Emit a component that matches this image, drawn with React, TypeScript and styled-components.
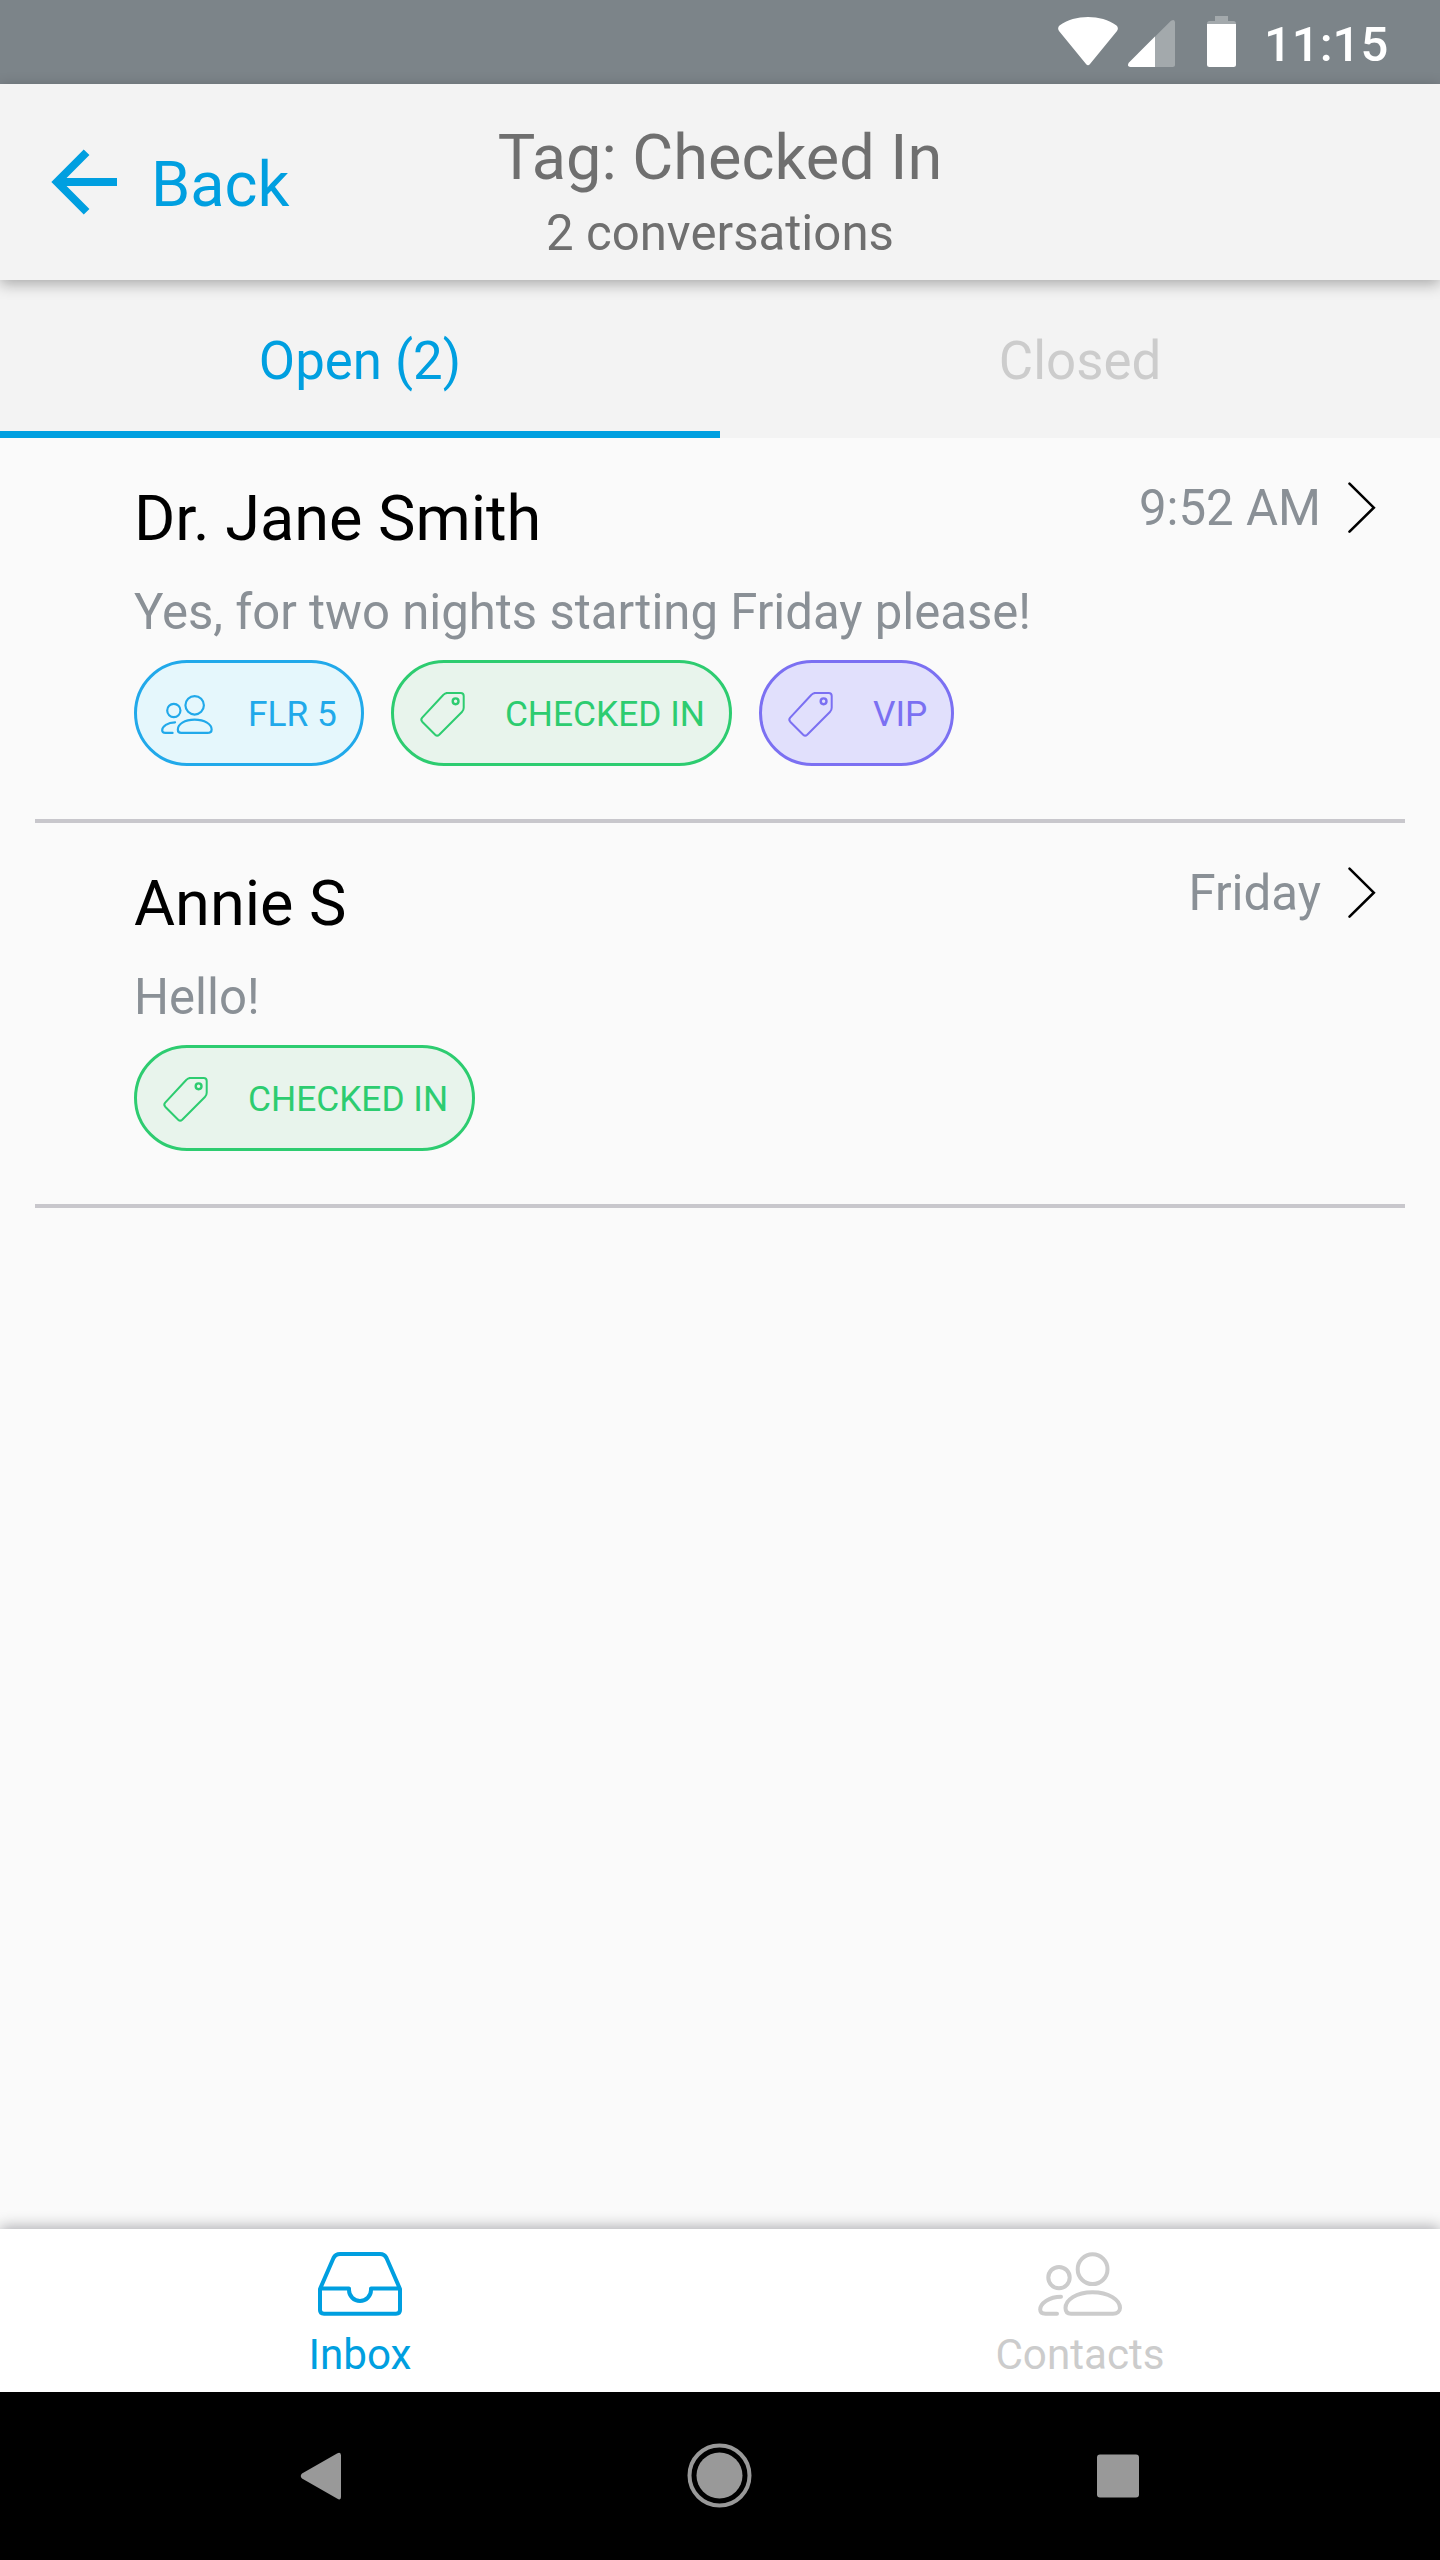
import React from "react";
import styled, { createGlobalStyle } from "styled-components";

const GlobalStyle = createGlobalStyle`
  * { box-sizing: border-box; }
  body { margin: 0; background: #fafafa; font-family: Roboto, "Liberation Sans", sans-serif; }
`;

const Screen = styled.div`
  width: 1440px;
  height: 2560px;
  display: flex;
  flex-direction: column;
  background: #fafafa;
  overflow: hidden;
`;

const StatusBar = styled.div`
  height: 84px;
  flex: none;
  display: flex;
  align-items: flex-start;
  justify-content: flex-end;
  padding-right: 48px;
  background: #7c8489;
`;

const StatusIcons = styled.svg`
  width: 190px;
  height: 84px;
  margin-right: 17px;
`;

const Clock = styled.span`
  width: 128px;
  font-size: 49px;
  font-weight: 500;
  line-height: 90px;
  color: #fff;
  white-space: nowrap;
`;

const Header = styled.header`
  height: 196px;
  flex: none;
  display: grid;
  grid-template-columns: 460px 520px 460px;
  background: #f3f3f3;
  box-shadow: 0 4px 14px rgba(0, 0, 0, 0.31);
  z-index: 1;
`;

const BackButton = styled.button`
  display: flex;
  align-items: flex-start;
  padding: 0 0 0 42px;
  border: 0;
  background: none;
  font: inherit;
  color: #009fe0;
`;

const BackArrow = styled.svg`
  width: 84px;
  height: 84px;
  margin-top: 56px;
`;

const BackLabel = styled.span`
  margin: 64px 0 0 25px;
  font-size: 63px;
  line-height: 74px;
`;

const Heading = styled.div`
  display: flex;
  flex-direction: column;
  align-items: center;
  padding-top: 37px;
  color: #6f6f6f;
  white-space: nowrap;
`;

const Title = styled.h1`
  margin: 0;
  font-size: 63px;
  font-weight: 400;
  line-height: 74px;
`;

const Subtitle = styled.span`
  margin-top: 9px;
  font-size: 49.2px;
  line-height: 58px;
`;

const Tabs = styled.div`
  height: 158px;
  flex: none;
  display: flex;
  background: #f3f3f3;
`;

const Tab = styled.div<{ $active?: boolean }>`
  flex: 1;
  padding-top: 49px;
  border-bottom: 7px solid ${(p) => (p.$active ? "#009fe0" : "transparent")};
  text-align: center;
  font-size: 52.8px;
  line-height: 64px;
  color: ${(p) => (p.$active ? "#009fe0" : "#cccccc")};
`;

const List = styled.main`
  flex: 1;
  padding: 0 35px;
`;

const Row = styled.article`
  height: 385px;
  padding: 44px 27px 0 99px;
  border-bottom: 4px solid #c8c7cc;
`;

const RowTop = styled.div`
  display: flex;
  justify-content: space-between;
  height: 102px;
`;

const Name = styled.h2`
  margin: 0;
  font-size: 63px;
  font-weight: 400;
  line-height: 74px;
  color: #000;
`;

const When = styled.div`
  display: flex;
  align-items: flex-start;
  font-size: 49.2px;
  line-height: 58px;
  margin-top: -3px;
  color: #8a9096;
`;

const Chevron = styled.svg`
  width: 36px;
  height: 58px;
  margin-left: 21px;
`;

const Preview = styled.p`
  margin: 0;
  font-size: 49.1px;
  line-height: 56px;
  color: #8a9096;
`;

const Chips = styled.div`
  display: flex;
  gap: 27px;
  margin-top: 20px;
`;

const Chip = styled.span<{ $color: string; $fill: string }>`
  height: 106px;
  display: flex;
  align-items: center;
  padding: 0 24px 0 23px;
  border: 3px solid ${(p) => p.$color};
  border-radius: 53px;
  background: ${(p) => p.$fill};
  color: ${(p) => p.$color};
  font-size: 35.3px;
  line-height: 42px;
  white-space: nowrap;
`;

const ChipIcon = styled.svg`
  width: 54px;
  height: 54px;
  margin-right: 34px;
`;

const ChipLabel = styled.span`
  padding-top: 2px;
`;

const BottomTabs = styled.nav`
  height: 163px;
  flex: none;
  display: flex;
  background: #fff;
  box-shadow: 0 -2px 14px rgba(0, 0, 20, 0.32);
`;

const BottomTab = styled.div<{ $active?: boolean }>`
  flex: 1;
  display: flex;
  flex-direction: column;
  align-items: center;
  padding-top: 15px;
  font-size: 42.2px;
  line-height: 50px;
  color: ${(p) => (p.$active ? "#009fe0" : "#cccccc")};
`;

const TabIcon = styled.svg`
  width: 84px;
  height: 84px;
  margin-bottom: 2px;
`;

const SystemNav = styled.div`
  height: 168px;
  flex: none;
  display: flex;
  justify-content: center;
  align-items: center;
  gap: 308px;
  background: #000;
`;

const NavIcon = styled.svg`
  width: 90px;
  height: 90px;
  fill: #999;
`;

const PeoplePaths = ({ strokeWidth }: { strokeWidth: number }) => (
  <g fill="none" stroke="currentColor" strokeWidth={strokeWidth} strokeLinecap="round" strokeLinejoin="round">
    <circle cx="54.6" cy="25.2" r="14.9" />
    <circle cx="21" cy="33.6" r="10.7" />
    <path d="M33 69.700H75C79 69.700 82 67.500 82 64C82 56 71 48.200 54.500 48.200S27.500 56 27.500 64C27.500 68 29.500 69.700 33 69.700Z" />
    <path d="M23 52.700C11 52.700 2.200 59.500 2.200 65.500C2.200 68.500 4 69.700 7.500 69.700H19" />
  </g>
);

const GroupIcon = () => (
  <ChipIcon viewBox="0 0 54 54">
    <g transform="translate(.8 3.700) scale(.62)">
      <PeoplePaths strokeWidth={3.5} />
    </g>
  </ChipIcon>
);

const TagIcon = () => (
  <ChipIcon viewBox="0 0 54 54" fill="none" stroke="currentColor" strokeLinejoin="round">
    <path
      d="M29.500 5.700H44Q47 5.700 47 8.700V20.500Q47 23 45.200 24.800L22.500 47.500Q20.500 49.300 18.500 47.500L5.500 34.500Q3.700 32.500 5.500 30.500L26.500 7.800Q28 5.700 30.500 5.700Z"
      strokeWidth="2"
      transform="translate(-.3 1.200)"
    />
    <circle cx="38.600" cy="15.300" r="2.900" strokeWidth="2.400" />
  </ChipIcon>
);

type ChipKind = "group" | "tag" | "vip";
const chipColors: Record<ChipKind, [string, string]> = {
  group: ["#21a9ea", "#e5f7fc"],
  tag: ["#2dcc70", "#e8f4ec"],
  vip: ["#7b70f2", "#e1e0fc"],
};

type Conversation = { name: string; time: string; preview: string; chips: [ChipKind, string][] };
const conversations: Conversation[] = [
  {
    name: "Dr. Jane Smith",
    time: "9:52 AM",
    preview: "Yes, for two nights starting Friday please!",
    chips: [
      ["group", "FLR 5"],
      ["tag", "CHECKED IN"],
      ["vip", "VIP"],
    ],
  },
  { name: "Annie S", time: "Friday", preview: "Hello!", chips: [["tag", "CHECKED IN"]] },
];

export default function App() {
  return (
    <>
      <GlobalStyle />
      <Screen>
        <StatusBar>
          <StatusIcons viewBox="0 0 190 84" fill="#fff">
            <path d="M2.500 25.500C18 14.200 44 14.200 59.500 25.500Q62 28 60 31L33 64Q31 66.500 29 64L2 31Q0 28 2.500 25.500Z" />
            <path d="M71.800 62.700L114 20.700Q118 18.500 118 22.500V64.500Q118 67 115.500 67H73.500Q69.500 66.500 71.800 62.700Z" fillOpacity=".3" />
            <path d="M71.800 62.700L98 36.500V67H73.500Q69.500 66.500 71.800 62.700Z" />
            <path d="M158 16H171V21H176.500Q179 21 179 24H150Q150 21 152.500 21H158Z" fillOpacity=".3" />
            <path d="M150 24H179V64.500Q179 67 176.500 67H152.500Q150 67 150 64.500Z" />
          </StatusIcons>
          <Clock>11:15</Clock>
        </StatusBar>
        <Header>
          <BackButton>
            <BackArrow viewBox="0 0 84 84" fill="none" stroke="currentColor" strokeWidth="8">
              <path d="M75 42H16M44.600 12.200L15 42L44.600 71.800" />
            </BackArrow>
            <BackLabel>Back</BackLabel>
          </BackButton>
          <Heading>
            <Title>Tag: Checked In</Title>
            <Subtitle>2 conversations</Subtitle>
          </Heading>
        </Header>
        <Tabs>
          <Tab $active>Open (2)</Tab>
          <Tab>Closed</Tab>
        </Tabs>
        <List>
          {conversations.map((c) => (
            <Row key={c.name}>
              <RowTop>
                <Name>{c.name}</Name>
                <When>
                  {c.time}
                  <Chevron viewBox="0 0 36 58" fill="none" stroke="#000" strokeWidth="2.600" strokeLinecap="round">
                    <path d="M7.500 4.700L31.800 28.700L7.500 52.700" />
                  </Chevron>
                </When>
              </RowTop>
              <Preview>{c.preview}</Preview>
              <Chips>
                {c.chips.map(([kind, label]) => (
                  <Chip key={label} $color={chipColors[kind][0]} $fill={chipColors[kind][1]}>
                    {kind === "group" ? <GroupIcon /> : <TagIcon />}
                    <ChipLabel>{label}</ChipLabel>
                  </Chip>
                ))}
              </Chips>
            </Row>
          ))}
        </List>
        <BottomTabs>
          <BottomTab $active>
            <TabIcon viewBox="0 0 84 84" fill="none" stroke="currentColor" strokeWidth="4" strokeLinejoin="round">
              <path d="M2 45L15.500 14Q17.500 10 22 10H62Q66.500 10 68.500 14L82 45V66Q82 69.700 78 69.700H6Q2 69.700 2 66ZM2 44.500H31V46A11 11 0 0 0 53 46V44.500H82" />
            </TabIcon>
            Inbox
          </BottomTab>
          <BottomTab>
            <TabIcon viewBox="0 0 84 84">
              <PeoplePaths strokeWidth={4} />
            </TabIcon>
            Contacts
          </BottomTab>
        </BottomTabs>
        <SystemNav>
          <NavIcon viewBox="0 0 90 90">
            <path d="M60 22.500Q64 20.500 64 24.500V66Q64 70 60 67.500L25 47.500Q22.500 45 25 42.500Z" />
          </NavIcon>
          <NavIcon viewBox="0 0 90 90">
            <circle cx="44.500" cy="44.500" r="23" />
            <circle cx="44.500" cy="44.500" r="30" fill="none" stroke="#999" strokeWidth="4" />
          </NavIcon>
          <NavIcon viewBox="0 0 90 90">
            <rect x="24" y="23.500" width="42" height="43" rx="3" />
          </NavIcon>
        </SystemNav>
      </Screen>
    </>
  );
}
